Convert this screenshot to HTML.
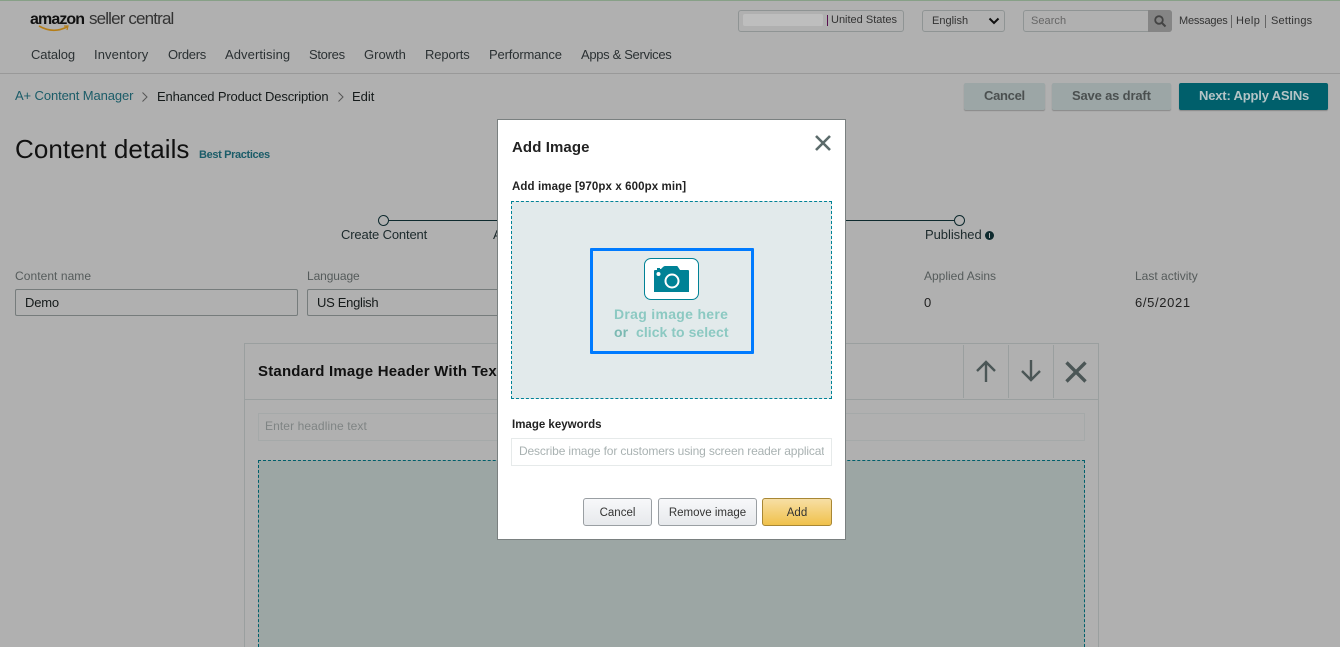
<!DOCTYPE html>
<html><head><meta charset="utf-8"><style>
html,body{margin:0;padding:0;width:1340px;height:647px;overflow:hidden}
body{background:#b0b0b0;position:relative;font-family:"Liberation Sans",sans-serif;color:#111}
.t{position:absolute;white-space:nowrap;line-height:16px}
.b{position:absolute;box-sizing:border-box}
.nav{font-size:13px;color:#2b3133;top:47px}
.lab{font-size:12px;color:#555b5b}
</style></head><body>
<div class="b" style="left:0;top:0;width:1340px;height:1px;background:#87a087"></div>
<div class="t" style="left:30px;top:10px;font-size:16px;font-weight:700;color:#111;letter-spacing:-.9px;line-height:20px">amazon</div>
<div class="t" style="left:89px;top:9px;font-size:17px;color:#333;letter-spacing:-.85px;line-height:20px">seller central</div>
<svg class="b" style="left:38px;top:25px" width="32" height="8" viewBox="0 0 32 8"><path d="M1 1Q15 9 29 2" fill="none" stroke="#b57d16" stroke-width="1.6"/><path d="M26 1l4 0-1 4" fill="none" stroke="#b57d16" stroke-width="1.2"/></svg>

<div class="t nav" style="left:31px;letter-spacing:-.12px">Catalog</div>
<div class="t nav" style="left:94px;letter-spacing:.1px">Inventory</div>
<div class="t nav" style="left:168px;letter-spacing:-.3px">Orders</div>
<div class="t nav" style="left:225px;letter-spacing:.08px">Advertising</div>
<div class="t nav" style="left:309px;letter-spacing:-.3px">Stores</div>
<div class="t nav" style="left:364px">Growth</div>
<div class="t nav" style="left:425px;letter-spacing:-.12px">Reports</div>
<div class="t nav" style="left:489px;letter-spacing:-.15px">Performance</div>
<div class="t nav" style="left:581px;letter-spacing:-.33px">Apps &amp; Services</div>
<div class="b" style="left:0;top:73px;width:1340px;height:1px;background:#999"></div>

<div class="b" style="left:738px;top:10px;width:166px;height:22px;border:1px solid #8f9494;border-radius:3px"></div>
<div class="b" style="left:743px;top:14px;width:80px;height:12px;background:#bebebe;border-radius:2px"></div>
<div class="b" style="left:827px;top:15px;width:1px;height:11px;background:#5a1050"></div>
<div class="t" style="left:831px;top:12px;font-size:11px;color:#333">United States</div>
<div class="b" style="left:922px;top:10px;width:83px;height:22px;border:1px solid #8f9494;border-radius:3px"></div>
<div class="t" style="left:932px;top:13px;font-size:11px;color:#333">English</div>
<svg class="b" style="top:17px;left:988px" width="12" height="8" viewBox="0 0 12 8"><path d="M1.500 1.500L6 6l4.500-4.500" fill="none" stroke="#111" stroke-width="2"/></svg>
<div class="b" style="left:1023px;top:10px;width:149px;height:22px;border:1px solid #8f9494;border-radius:3px"></div>
<div class="b" style="left:1148px;top:10px;width:24px;height:22px;background:#858585;border-radius:0 3px 3px 0"></div>
<svg class="b" style="left:1153px;top:14px" width="14" height="14" viewBox="0 0 14 14"><circle cx="6" cy="6" r="3.800" fill="none" stroke="#444" stroke-width="1.800"/><path d="M9 9l3.500 3.500" stroke="#444" stroke-width="2"/></svg>
<div class="t" style="left:1031px;top:13px;font-size:11px;color:#666;letter-spacing:.05px">Search</div>
<div class="t" style="left:1179px;top:13px;font-size:11px;color:#333;letter-spacing:-.2px">Messages</div>
<div class="b" style="left:1231px;top:15px;width:1px;height:13px;background:#666"></div>
<div class="t" style="left:1236px;top:13px;font-size:11px;color:#333;letter-spacing:.4px">Help</div>
<div class="b" style="left:1265px;top:15px;width:1px;height:13px;background:#666"></div>
<div class="t" style="left:1271px;top:13px;font-size:11px;color:#333;letter-spacing:.2px">Settings</div>

<div class="t" style="left:15px;top:88px;font-size:13px;color:#1b5c68;letter-spacing:-.11px">A+ Content Manager</div>
<svg class="b" style="left:141px;top:91px" width="8" height="12" viewBox="0 0 8 12"><path d="M1.500 1.500L6 6l-4.500 4.500" fill="none" stroke="#555" stroke-width="1"/></svg>
<div class="t" style="left:157px;top:89px;font-size:13px;color:#151a1a;letter-spacing:-.15px">Enhanced Product Description</div>
<svg class="b" style="left:337px;top:91px" width="8" height="12" viewBox="0 0 8 12"><path d="M1.500 1.500L6 6l-4.500 4.500" fill="none" stroke="#555" stroke-width="1"/></svg>
<div class="t" style="left:352px;top:89px;font-size:13px;color:#151a1a">Edit</div>

<div class="b" style="left:964px;top:83px;width:81px;height:27px;background:#9ca6a6;border-radius:2px;box-shadow:0 1px 1px #888"></div>
<div class="t" style="left:984px;top:88px;font-size:13px;font-weight:700;color:#4b5050;letter-spacing:-.3px">Cancel</div>
<div class="b" style="left:1052px;top:83px;width:119px;height:27px;background:#9ca6a6;border-radius:2px;box-shadow:0 1px 1px #888"></div>
<div class="t" style="left:1072px;top:88px;font-size:13px;font-weight:700;color:#4b5050;letter-spacing:-.17px">Save as draft</div>
<div class="b" style="left:1179px;top:83px;width:149px;height:27px;background:#005f6b;border-radius:2px;box-shadow:0 1px 1px #888"></div>
<div class="t" style="left:1199px;top:88px;font-size:13px;font-weight:700;color:#b4c4c6;letter-spacing:-.18px">Next: Apply ASINs</div>

<div class="t" style="left:15px;top:134px;font-size:26px;line-height:30px;color:#111;letter-spacing:.07px">Content details</div>
<div class="t" style="left:199px;top:147px;font-size:11px;font-weight:700;color:#1b5c68;letter-spacing:-.36px">Best Practices</div>

<div class="b" style="left:389px;top:220px;width:565px;height:1px;background:#0e2a2e"></div>
<div class="b" style="left:378px;top:215px;width:11px;height:11px;border:1px solid #0e2a2e;border-radius:50%;background:#b0b0b0"></div>
<div class="b" style="left:954px;top:215px;width:11px;height:11px;border:1px solid #0e2a2e;border-radius:50%;background:#b0b0b0"></div>
<div class="t" style="left:341px;top:227px;font-size:13px;color:#1c2a2c;letter-spacing:-.15px">Create Content</div>
<div class="t" style="left:493px;top:227px;font-size:13px;color:#1c2a2c">A</div>
<div class="t" style="left:925px;top:227px;font-size:13px;color:#1c2a2c;letter-spacing:-.05px">Published</div>
<div class="b" style="left:985px;top:231px;width:9px;height:9px;border-radius:50%;background:#0e2a2e"></div>
<div class="b" style="left:989px;top:233px;width:1px;height:5px;background:#b0b0b0"></div>

<div class="t lab" style="left:15px;top:268px;letter-spacing:.06px">Content name</div>
<div class="b" style="left:15px;top:289px;width:283px;height:27px;border:1px solid #767c7c;border-radius:2px"></div>
<div class="t" style="left:25px;top:295px;font-size:13px;color:#151a1a;letter-spacing:-.2px">Demo</div>
<div class="t lab" style="left:307px;top:268px;letter-spacing:-.1px">Language</div>
<div class="b" style="left:307px;top:289px;width:200px;height:27px;border:1px solid #767c7c;border-radius:2px"></div>
<div class="t" style="left:317px;top:295px;font-size:13px;color:#151a1a;letter-spacing:-.3px">US English</div>
<div class="t lab" style="left:924px;top:268px">Applied Asins</div>
<div class="t" style="left:924px;top:295px;font-size:13px;color:#222">0</div>
<div class="t lab" style="left:1135px;top:268px">Last activity</div>
<div class="t" style="left:1135px;top:295px;font-size:13px;color:#222;letter-spacing:.65px">6/5/2021</div>

<div class="b" style="left:244px;top:343px;width:855px;height:304px;border:1px solid #9a9f9f;border-bottom:0"></div>
<div class="b" style="left:245px;top:399px;width:853px;height:1px;background:#9a9f9f"></div>
<div class="t" style="left:258px;top:364px;font-size:15px;font-weight:700;color:#111;letter-spacing:.2px;width:239px;overflow:hidden">Standard Image Header With Text</div>
<div class="b" style="left:963px;top:345px;width:1px;height:53px;background:#9a9f9f"></div>
<div class="b" style="left:1008px;top:345px;width:1px;height:53px;background:#9a9f9f"></div>
<div class="b" style="left:1053px;top:345px;width:1px;height:53px;background:#9a9f9f"></div>
<svg class="b" style="left:974px;top:358px" width="24" height="26" viewBox="0 0 24 26"><path d="M12 24V4M3 13l9-9 9 9" fill="none" stroke="#4b5656" stroke-width="2.400"/></svg>
<svg class="b" style="left:1019px;top:358px" width="24" height="26" viewBox="0 0 24 26"><path d="M12 2v20M3 13l9 9 9-9" fill="none" stroke="#4b5656" stroke-width="2.400"/></svg>
<svg class="b" style="left:1064px;top:360px" width="24" height="24" viewBox="0 0 24 24"><path d="M2.500 2.500l19 19M21.500 2.500l-19 19" fill="none" stroke="#4b5656" stroke-width="3.400"/></svg>
<div class="b" style="left:258px;top:413px;width:827px;height:28px;border:1px solid #a5a9a9"></div>
<div class="t" style="left:265px;top:418px;font-size:12px;color:#7f8484;letter-spacing:.1px">Enter headline text</div>
<div class="b" style="left:258px;top:460px;width:827px;height:187px;background:#9ca6a4;border:1px dashed #005f6b;border-bottom:0"></div>

<!-- modal -->
<div class="b" style="left:497px;top:119px;width:349px;height:421px;background:#fff;border:1px solid #7a8080"></div>
<div class="t" style="left:512px;top:139px;font-size:15px;font-weight:700;color:#222;letter-spacing:.1px;line-height:18px">Add Image</div>
<svg class="b" style="left:814px;top:134px" width="18" height="18" viewBox="0 0 18 18"><path d="M2 2l14 14M16 2L2 16" fill="none" stroke="#5c6b6b" stroke-width="2.600"/></svg>
<div class="t" style="left:512px;top:179px;font-size:11.500px;font-weight:700;color:#222;letter-spacing:.1px">Add image [970px x 600px min]</div>
<div class="b" style="left:511px;top:201px;width:321px;height:198px;background:#e2eaeb;border:1px dashed #008296"></div>
<div class="b" style="left:590px;top:248px;width:164px;height:106px;border:3px solid #007bff;border-radius:1px"></div>
<div class="b" style="left:644px;top:258px;width:55px;height:42px;background:#fff;border:1px solid #008296;border-radius:7px"></div>
<svg class="b" style="left:654px;top:266px" width="36" height="28" viewBox="0 0 36 28"><path d="M1 4q-1 0-1 1v21h35V5q0-1-1-1h-8l-2-3q-.5-1-1-1H11q-1 0-2 1L7 3H6V2H3v2z" fill="#008296"/><circle cx="18" cy="15" r="6.500" fill="none" stroke="#fff" stroke-width="2"/><circle cx="4.500" cy="8" r="2" fill="#fff"/></svg>
<div class="t" style="left:614px;top:306px;font-size:14px;font-weight:700;color:#8cc9c2;letter-spacing:.3px">Drag image here</div>
<div class="t" style="left:614px;top:324px;font-size:14px;font-weight:700;color:#8cc9c2;letter-spacing:.05px"><b style="color:#7bb9b2">or</b>&nbsp; click to select</div>
<div class="t" style="left:512px;top:417px;font-size:11.500px;font-weight:700;color:#222">Image keywords</div>
<div class="b" style="left:511px;top:438px;width:321px;height:28px;border:1px solid #e6eaea"></div>
<div class="t" style="left:519px;top:443px;width:305px;overflow:hidden;font-size:12px;color:#a9b2b2;letter-spacing:-.14px">Describe image for customers using screen reader applications</div>
<div class="b" style="left:583px;top:498px;width:69px;height:28px;border:1px solid #9a9fa3;border-radius:3px;background:linear-gradient(#f7f8fa,#e7e9ec)"></div>
<div class="t" style="left:583px;top:505px;width:69px;text-align:center;font-size:11.500px;color:#333">Cancel</div>
<div class="b" style="left:658px;top:498px;width:99px;height:28px;border:1px solid #9a9fa3;border-radius:3px;background:linear-gradient(#f7f8fa,#e7e9ec)"></div>
<div class="t" style="left:658px;top:505px;width:99px;text-align:center;font-size:11.500px;color:#333">Remove image</div>
<div class="b" style="left:762px;top:498px;width:70px;height:28px;border:1px solid #a88734;border-radius:3px;background:linear-gradient(#f7dfa5,#f0c14b)"></div>
<div class="t" style="left:762px;top:505px;width:70px;text-align:center;font-size:11.500px;color:#333">Add</div>
</body></html>
